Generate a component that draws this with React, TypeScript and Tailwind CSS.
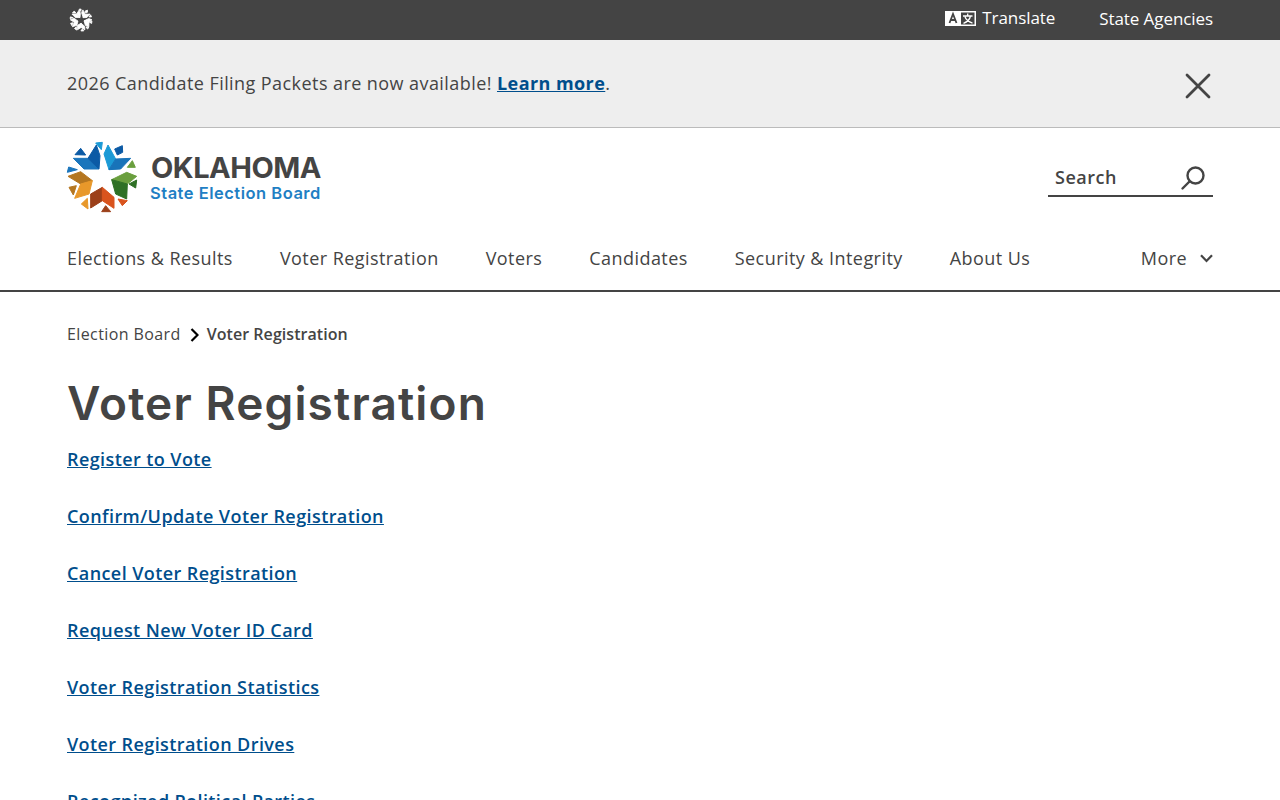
import React from 'react';

const navItems = ['Elections & Results', 'Voter Registration', 'Voters', 'Candidates', 'Security & Integrity', 'About Us'];

const links = [
  'Register to Vote',
  'Confirm/Update Voter Registration',
  'Cancel Voter Registration',
  'Request New Voter ID Card',
  'Voter Registration Statistics',
  'Voter Registration Drives',
  'Recognized Political Parties',
];

// star pieces traced from the logo, on a 228 box
const starPieces: [string, string][] = [
  ['28,58 72,58 105,90 60,90', '#1a75bc'],
  ['72,58 97,18 108,50 105,90', '#0b5aa5'],
  ['120,45 132,18 155,60 135,92', '#1b9ad6'],
  ['155,60 200,58 170,90 135,92', '#1873b9'],
  ['33,47 50,28 65,48', '#0b5aa5'],
  ['95,12 115,10 112,32', '#1b9ad6'],
  ['152,30 175,20 176,40 160,48', '#0b5aa5'],
  ['10,100 14,84 40,92', '#1a75bc'],
  ['143,122 188,100 218,112 190,135', '#6a9f3e'],
  ['143,122 190,135 188,180 155,165', '#2e7025'],
  ['190,85 205,65 214,85', '#6a9f3e'],
  ['195,135 218,123 215,147', '#2e7025'],
  ['12,112 50,98 85,125 50,135', '#b5761f'],
  ['50,135 85,125 75,165 32,178', '#e8982a'],
  ['15,145 37,140 28,168', '#b5761f'],
  ['52,195 70,178 72,210', '#e8982a'],
  ['80,207 80,165 115,145 115,185', '#9c401a'],
  ['115,145 150,175 150,208 115,185', '#d9541e'],
  ['113,218 125,200 140,218', '#9c401a'],
  ['162,180 190,185 175,200', '#d9541e'],
];

const Star = ({ mono, className }: { mono?: boolean; className: string }) => (
  <svg viewBox="0 0 228 228" className={className}>
    {starPieces.map(([points, fill]) => (
      <polygon
        key={points}
        points={points}
        fill={mono ? '#fff' : fill}
        stroke={mono ? '#fff' : fill}
        strokeWidth={mono ? 8 : 3}
      />
    ))}
  </svg>
);

const TranslateIcon = () => (
  <svg viewBox="0 0 31 15" className="w-[31px] h-[15px]">
    <rect x="0" y="0" width="31" height="15" fill="#fff" />
    <rect x="16" y="1.5" width="13.5" height="12" fill="#444" />
    <path d="M4.5 12 L8 3 L11.5 12 M5.8 9 H10.2" stroke="#444" strokeWidth="1.8" fill="none" />
    <path d="M22.7 2.5 V5 M18 5 H27.5 M25.5 5 C24.8 8.5 22 11 18.5 12.3 M20 5.8 C21 8.8 24 11 27.5 12.2" stroke="#fff" strokeWidth="1.3" fill="none" />
  </svg>
);

const SearchIcon = () => (
  <svg viewBox="0 0 26 26" className="w-[26px] h-[26px]" fill="none" stroke="#444" strokeWidth="2.4" strokeLinecap="round">
    <circle cx="15.5" cy="10.5" r="8" />
    <path d="M9.5 16.5 L2.5 23.5" />
  </svg>
);

const CloseIcon = () => (
  <svg viewBox="0 0 26 26" className="w-[26px] h-[26px]" fill="none" stroke="#444" strokeWidth="2.8" strokeLinecap="round">
    <path d="M2 2 L24 24 M24 2 L2 24" />
  </svg>
);

export default function App() {
  return (
    <div className="h-screen overflow-hidden bg-white text-[#444] font-['Open_Sans',sans-serif]">
      <div className="h-10 bg-[#444] flex items-center justify-between pl-[69px] pr-[67px] text-white">
        <Star mono className="w-[24px] h-[24px]" />
        <div className="flex items-center gap-[44px] text-[17px] tracking-[-0.08px] -mt-[2px]">
          <div className="flex items-center gap-[6px] -mt-[2px]">
            <TranslateIcon />
            <span>Translate</span>
          </div>
          <span>State Agencies</span>
        </div>
      </div>

      <div className="h-[88px] bg-[#eee] border-b border-[#bbb] flex items-center justify-between pl-[67px] pr-[69px]">
        <p className="text-[18px] tracking-[0.43px] -mt-[1px]">
          2026 Candidate Filing Packets are now available!{' '}
          <a href="#" className="font-bold text-[#004e8c] underline">Learn more</a>.
        </p>
        <div className="mt-[4px]">
          <CloseIcon />
        </div>
      </div>

      <header className="border-b-2 border-[#444]">
        <div className="flex items-start justify-between pl-[64px] pr-[67px] pt-[11px]">
          <div className="flex items-center">
            <Star className="w-[76px] h-[76px]" />
            <div className="ml-[11px] flex flex-col font-['Inter',sans-serif]">
              <span className="-mt-[1px] mb-[1px] text-[29px] leading-[31px] font-bold tracking-[-0.5px] text-[#444]">OKLAHOMA</span>
              <span className="-ml-[1px] text-[16.5px] leading-[18px] font-semibold tracking-[0.5px] text-[#1f7fc4]">State Election Board</span>
            </div>
          </div>
          <div className="mt-[22px] w-[165px] h-[36px] pb-[1px] border-b-2 border-[#444] flex items-center justify-between pl-[7px] pr-[7px]">
            <span className="text-[18px] font-semibold tracking-[0.5px]">Search</span>
            <SearchIcon />
          </div>
        </div>
        <nav className="flex items-center justify-between pl-[67px] pr-[67px] h-[73px] pt-[9px] mt-[2px]">
          <div className="flex items-center gap-[47px] text-[18px] tracking-[0.44px]">
            {navItems.map(item => (
              <span key={item}>{item}</span>
            ))}
          </div>
          <div className="flex items-center gap-[13px] text-[18px] tracking-[0.44px]">
            <span>More</span>
            <svg viewBox="0 0 13 9" className="w-[13px] h-[9px]" fill="none" stroke="#444" strokeWidth="2.2">
              <path d="M1 1.2 L6.5 7 L12 1.2" />
            </svg>
          </div>
        </nav>
      </header>

      <main className="pl-[67px] pt-[30px]">
        <div className="flex items-center text-[16px] leading-[24px]">
          <span className="tracking-[0.4px]">Election Board</span>
          <svg viewBox="0 0 9 14" className="w-[9px] h-[14px] ml-[9px] mr-[8px] mt-[2px]" fill="none" stroke="#000" strokeWidth="2.2">
            <path d="M1.5 1 L7.5 7 L1.5 13" />
          </svg>
          <span className="font-semibold tracking-[0.05px]">Voter Registration</span>
        </div>
        <h1 className="mt-[29px] text-[46px] leading-[56px] font-semibold tracking-[1.15px] font-['Inter',sans-serif] text-[#444]">Voter Registration</h1>
        <ul className="mt-[15px] flex flex-col gap-[29px]">
          {links.map(link => (
            <li key={link} className="leading-[27px]">
              <a href="#" className="text-[18px] font-semibold tracking-[0.41px] text-[#004e8c] underline">{link}</a>
            </li>
          ))}
        </ul>
      </main>
    </div>
  );
}
